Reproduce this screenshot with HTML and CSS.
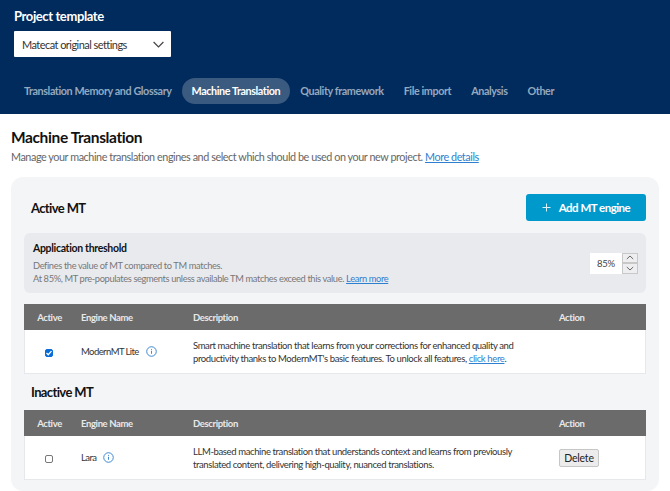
FILE: index.html
```html
<!DOCTYPE html>
<html lang="en">
<head>
<meta charset="utf-8">
<title>Machine Translation</title>
<link rel="stylesheet" href="styles.css">
</head>
<body>
<header class="top">
  <div class="top-label">Project template</div>
  <div class="select"><span>Matecat original settings</span>
    <svg class="chev" width="11" height="7" viewBox="0 0 11 7"><path d="M.6 1l4.900 5 4.900-5" fill="none" stroke="#444" stroke-width="1.200"/></svg>
  </div>
  <nav class="tabs">
    <a class="tab">Translation Memory and Glossary</a>
    <a class="tab active">Machine Translation</a>
    <a class="tab">Quality framework</a>
    <a class="tab">File import</a>
    <a class="tab">Analysis</a>
    <a class="tab">Other</a>
  </nav>
</header>
<main class="main">
  <h1 class="title">Machine Translation</h1>
  <p class="lead">Manage your machine translation engines and select which should be used on your new project. <a class="link">More details</a></p>
  <section class="panel">
    <div class="panel-head">
      <h2 class="h2">Active MT</h2>
      <button class="add"><svg width="9" height="9" viewBox="0 0 9 9"><path d="M4.500 .5v8M.5 4.500h8" stroke="#dff1f8" stroke-width="1"/></svg><span>Add MT engine</span></button>
    </div>
    <div class="threshold">
      <div>
        <div class="th-title">Application threshold</div>
        <div class="th-text">Defines the value of MT compared to TM matches.<br>At 85%, MT pre-populates segments unless available TM matches exceed this value. <a class="link">Learn more</a></div>
      </div>
      <div class="stepper">
        <div class="st-val">85%</div>
        <div class="st-btns">
          <div class="st-btn"><svg width="8" height="5" viewBox="0 0 8 5"><path d="M.8 4L4 1l3.200 3" fill="none" stroke="#666"/></svg></div>
          <div class="st-btn"><svg width="8" height="5" viewBox="0 0 8 5"><path d="M.8 1L4 4l3.200-3" fill="none" stroke="#666"/></svg></div>
        </div>
      </div>
    </div>
    <div class="table">
      <div class="row thead"><div class="c1">Active</div><div>Engine Name</div><div>Description</div><div>Action</div></div>
      <div class="row tbody">
        <div class="c1"><span class="check on"><svg width="7" height="6" viewBox="0 0 7 6"><path d="M.6 3l2 2L6.400 .8" fill="none" stroke="#fff" stroke-width="1.500"/></svg></span></div>
        <div class="name"><span>ModernMT Lite</span><svg class="info" width="11" height="11" viewBox="0 0 12 12"><circle cx="6" cy="6" r="5.200" fill="none" stroke="#2f7fd0"/><path d="M6 5.200v3.300M6 3.200v1" stroke="#2f7fd0" stroke-width="1"/></svg></div>
        <div class="desc">Smart machine translation that learns from your corrections for enhanced quality and productivity thanks to ModernMT's basic features. To unlock all features, <a class="link">click here</a>.</div>
        <div></div>
      </div>
    </div>
    <h2 class="h2 inactive">Inactive MT</h2>
    <div class="table">
      <div class="row thead"><div class="c1">Active</div><div>Engine Name</div><div>Description</div><div>Action</div></div>
      <div class="row tbody">
        <div class="c1"><span class="check"></span></div>
        <div class="name"><span>Lara</span><svg class="info" width="11" height="11" viewBox="0 0 12 12"><circle cx="6" cy="6" r="5.200" fill="none" stroke="#2f7fd0"/><path d="M6 5.200v3.300M6 3.200v1" stroke="#2f7fd0" stroke-width="1"/></svg></div>
        <div class="desc">LLM-based machine translation that understands context and learns from previously translated content, delivering high-quality, nuanced translations.</div>
        <div><button class="del">Delete</button></div>
      </div>
    </div>
  </section>
</main>
</body>
</html>
```
FILE: styles.css
```css
* { box-sizing: border-box; }
html, body { margin: 0; padding: 0; }
body { width: 670px; height: 491px; overflow: hidden; background: #fff; font-family: "Lato", "Noto Sans", sans-serif; color: #222; }
.top { height: 114px; background: #002b5c; padding: 9px 14px 0; }
.top-label { color: #fff; font-size: 13px; letter-spacing: -.03em; font-weight: 700; line-height: 14px; }
.select { margin-top: 8px; width: 157px; height: 26px; background: #fff; display: flex; align-items: center; justify-content: space-between; padding: 0 7px 0 8px; font-size: 11px; letter-spacing: -.05em; color: #333; border-radius: 1px; }
.tabs { display: flex; margin-top: 21px; }
.tab { height: 26px; line-height: 26px; padding: 0 10px; color: #94a8bf; font-size: 10.800px; letter-spacing: -.038em; font-weight: 700; border-radius: 13px; white-space: nowrap; }
.tab.active { background: #3a5a80; color: #fff; }
.main { padding: 15px 11px 0; }
.title { margin: 0; font-size: 15.500px; letter-spacing: -.025em; font-weight: 700; line-height: 16px; color: #111; }
.lead { margin: 5px 0 0; font-size: 10.800px; letter-spacing: -.04em; line-height: 14px; color: #666; }
.link { color: #2f7fd0; text-decoration: underline; }
.panel { margin-top: 13px; height: 314px; background: #f4f5f7; border-radius: 12px; padding: 17px 13px 0; }
.panel-head { display: flex; align-items: center; justify-content: space-between; height: 27px; padding-left: 7px; }
.h2 { margin: 0; font-size: 13px; letter-spacing: -.048em; font-weight: 700; color: #111; }
.add { width: 120px; height: 27px; border: 0; border-radius: 3px; background: #0099cc; color: #fff; display: flex; align-items: center; justify-content: center; gap: 8px; font: 700 11.500px "Lato", sans-serif; letter-spacing: -.045em; }
.threshold { margin-top: 12px; height: 60px; background: #e9eaee; border-radius: 6px; display: flex; align-items: center; justify-content: space-between; padding: 0 8px 0 9px; }
.th-title { font-size: 10.500px; letter-spacing: -.03em; font-weight: 700; color: #111; line-height: 13px; margin-bottom: 4px; }
.th-text { font-size: 9.300px; letter-spacing: -.04em; line-height: 13px; color: #777; }
.stepper { display: flex; align-items: stretch; height: 21px; }
.st-val { width: 32px; background: #fff; font-size: 9.500px; letter-spacing: -.03em; display: flex; align-items: center; justify-content: center; color: #444; }
.st-btns { width: 16px; display: flex; flex-direction: column; }
.st-btn { flex: 1; border: 1px solid #c8c8c8; display: flex; align-items: center; justify-content: center; background: #eeeef0; }
.table { margin-top: 11px; background: #fff; border: 1px solid #e6e8ec; border-top: 0; }
.row { display: grid; grid-template-columns: 49px 119px 366px 1fr; align-items: center; margin: 0 -1px; padding-left: 1px; }
.thead { height: 26px; background: #6b6b6b; color: #e8e8e8; font-size: 9.500px; letter-spacing: -.04em; font-weight: 700; }
.tbody { height: 43px; font-size: 9.500px; letter-spacing: -.04em; color: #333; }
.c1 { text-align: center; }
.tbody .c1 { padding-right: 2px; }
.row > div:nth-child(2) { padding-left: 7px; }
.name { display: flex; align-items: center; gap: 7px; letter-spacing: -.06em; }
.desc { line-height: 13px; padding-right: 12px; }
.check { display: inline-block; width: 8px; height: 8px; border: 1px solid #777; border-radius: 2px; background: #fff; vertical-align: middle; }
.check.on { background: #0a6cd6; border-color: #0a6cd6; display: inline-flex; align-items: center; justify-content: center; }
.inactive { margin-top: 10px; padding-left: 7px; line-height: 16px; }
.inactive + .table { margin-top: 10px; }
.del { width: 40px; height: 18px; padding: 0; border: 1px solid #c6c6c6; border-radius: 2px; background: #ececec; font: 400 10.500px "Lato", sans-serif; letter-spacing: -.02em; color: #222; }
```
